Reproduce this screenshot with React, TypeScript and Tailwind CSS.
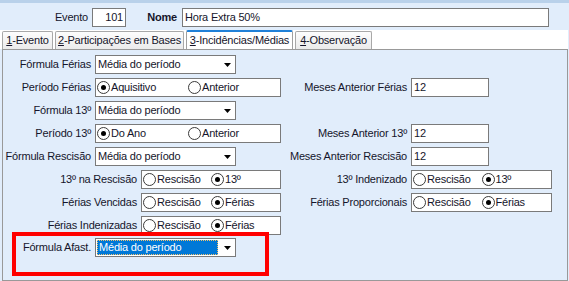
import React from 'react';

const Radio = ({ checked, label }: { checked?: boolean; label: string }) => (
  <div className="flex items-center whitespace-nowrap">
    <span className="flex h-[13px] w-[13px] items-center justify-center rounded-full border border-[#3a3a3a] bg-white">
      {checked && <span className="h-[5px] w-[5px] rounded-full bg-black" />}
    </span>
    <span className="ml-[1px]">{label}</span>
  </div>
);

const RadioGroup = ({ width, options, selected }: { width: string; options: string[]; selected: number }) => (
  <div className={`${width} grid h-[19px] grid-cols-2 items-center border border-[#7a7a7a] bg-white px-[1px]`}>
    {options.map((o, i) => (
      <Radio key={o} label={o} checked={i === selected} />
    ))}
  </div>
);

const Arrow = () => (
  <svg width="7" height="4" viewBox="0 0 7 4">
    <polygon points="0,0 7,0 3.5,4" fill="#000" />
  </svg>
);

const Select = ({ focused }: { focused?: boolean }) => (
  <div className="flex h-[19px] w-[141px] items-center justify-between border border-[#7a7a7a] bg-white pl-[1px] pr-[4px]">
    {focused ? (
      <span className="flex h-[15px] w-[121px] items-center border border-dotted border-[#f3c26b] bg-[#0078d7] pl-[1px] text-white">
        Média do período
      </span>
    ) : (
      <span className="pl-[1px]">Média do período</span>
    )}
    <Arrow />
  </div>
);

const TextInput = ({ value, width, right }: { value: string; width: string; right?: boolean }) => (
  <div className={`${width} flex h-[19px] items-center border border-[#7a7a7a] bg-white px-[2px] ${right ? 'justify-end' : ''}`}>
    {value}
  </div>
);

const Label = ({ text, width }: { text: string; width: string }) => (
  <div className={`${width} mr-[4px] flex justify-end whitespace-nowrap`}>{text}</div>
);

const Row = ({ left, right }: { left: React.ReactNode; right?: React.ReactNode }) => (
  <div className="flex h-[19px] items-center">
    <div className="flex w-[287px] items-center">{left}</div>
    {right && <div className="flex items-center">{right}</div>}
  </div>
);

const Tab = ({ digit, rest, width, active }: { digit: string; rest: string; width: string; active?: boolean }) => (
  <div
    className={
      active
        ? `${width} flex h-[19px] items-center justify-center rounded-t-[2px] border-x border-t-2 border-x-[#a0a0a0] border-t-[#1f80d8] bg-white`
        : `${width} flex h-[18px] items-center justify-center rounded-t-[2px] border-x border-t border-[#a8a8a8] bg-gradient-to-b from-[#fdfdfd] to-[#ebebeb]`
    }
  >
    <span className="whitespace-nowrap">
      <span className="underline">{digit}</span>
      {rest}
    </span>
  </div>
);

export default function App() {
  return (
    <div className="flex h-[281px] w-[569px] flex-col overflow-hidden bg-[#e1edfb] font-['Liberation_Sans',Arial,sans-serif] text-[11px] tracking-[-0.2px] text-[#15152b]">
      <div className="h-[3px] bg-[#b9d1ea]" />

      {/* header */}
      <div className="mt-[5px] flex items-center pl-[2px]">
        <Label text="Evento" width="w-[86px]" />
        <TextInput value="101" width="w-[34px]" right />
        <div className="mr-[5px] w-[51px] text-right font-bold">Nome</div>
        <TextInput value="Hora Extra 50%" width="w-[367px]" />
      </div>

      {/* tabs */}
      <div className="mt-[3px] flex h-[19px] w-[568px] items-end gap-[2px] bg-white pl-[2px]">
        <Tab digit="1" rest="-Evento" width="w-[51px]" />
        <Tab digit="2" rest="-Participações em Bases" width="w-[129px]" />
        <Tab digit="3" rest="-Incidências/Médias" width="w-[107px]" active />
        <Tab digit="4" rest="-Observação" width="w-[77px]" />
      </div>

      {/* panel */}
      <div className="relative ml-[2px] w-[566px] flex-1 border border-[#999] pt-[5px]">
        <div className="flex flex-col gap-[4px]">
          <Row left={<><Label text="Fórmula Férias" width="w-[88px]" /><Select /></>} />
          <Row
            left={<><Label text="Período Férias" width="w-[88px]" /><RadioGroup width="w-[186px]" options={['Aquisitivo', 'Anterior']} selected={0} /></>}
            right={<><Label text="Meses Anterior Férias" width="w-[117px]" /><TextInput value="12" width="w-[78px]" /></>}
          />
          <Row left={<><Label text="Fórmula 13º" width="w-[88px]" /><Select /></>} />
          <Row
            left={<><Label text="Período 13º" width="w-[88px]" /><RadioGroup width="w-[186px]" options={['Do Ano', 'Anterior']} selected={0} /></>}
            right={<><Label text="Meses Anterior 13º" width="w-[117px]" /><TextInput value="12" width="w-[78px]" /></>}
          />
          <Row
            left={<><Label text="Fórmula Rescisão" width="w-[88px]" /><Select /></>}
            right={<><Label text="Meses Anterior Rescisão" width="w-[117px]" /><TextInput value="12" width="w-[78px]" /></>}
          />
          <Row
            left={<><Label text="13º na Rescisão" width="w-[134px]" /><RadioGroup width="w-[140px]" options={['Rescisão', '13º']} selected={1} /></>}
            right={<><Label text="13º Indenizado" width="w-[117px]" /><RadioGroup width="w-[141px]" options={['Rescisão', '13º']} selected={1} /></>}
          />
          <Row
            left={<><Label text="Férias Vencidas" width="w-[134px]" /><RadioGroup width="w-[140px]" options={['Rescisão', 'Férias']} selected={1} /></>}
            right={<><Label text="Férias Proporcionais" width="w-[117px]" /><RadioGroup width="w-[141px]" options={['Rescisão', 'Férias']} selected={1} /></>}
          />
          <Row left={<><Label text="Férias Indenizadas" width="w-[134px]" /><RadioGroup width="w-[140px]" options={['Rescisão', 'Férias']} selected={1} /></>} />
          <div className="-mt-[1px]">
            <Row left={<><Label text="Fórmula Afast." width="w-[88px]" /><Select focused /></>} />
          </div>
        </div>

        {/* highlight annotation */}
        <div className="pointer-events-none absolute left-[9px] top-[182px] h-[44px] w-[257px] border-4 border-[#ff0000]" />
      </div>
    </div>
  );
}
